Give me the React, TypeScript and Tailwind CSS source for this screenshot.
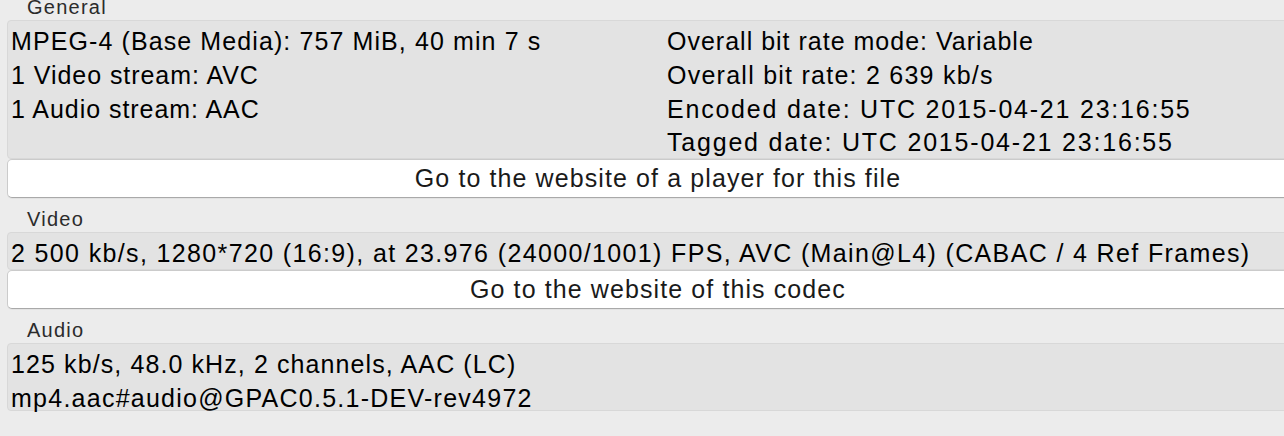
import React from 'react';

type Line = { text: string; track: string };

type Section = {
  title: string;
  height: string;
  left: Line[];
  right?: Line[];
  button?: string;
};

const sections: Section[] = [
  {
    title: 'General',
    height: 'h-[139px]',
    left: [
      { text: 'MPEG-4 (Base Media): 757 MiB, 40 min 7 s', track: 'tracking-[1.1px]' },
      { text: '1 Video stream: AVC', track: 'tracking-[0.95px]' },
      { text: '1 Audio stream: AAC', track: 'tracking-[0.95px]' },
    ],
    right: [
      { text: 'Overall bit rate mode: Variable', track: 'tracking-[1px]' },
      { text: 'Overall bit rate: 2 639 kb/s', track: 'tracking-[1.25px]' },
      { text: 'Encoded date: UTC 2015-04-21 23:16:55', track: 'tracking-[1.78px]' },
      { text: 'Tagged date: UTC 2015-04-21 23:16:55', track: 'tracking-[1.8px]' },
    ],
    button: 'Go to the website of a player for this file',
  },
  {
    title: 'Video',
    height: 'h-[38px]',
    left: [
      {
        text: '2 500 kb/s, 1280*720 (16:9), at 23.976 (24000/1001) FPS, AVC (Main@L4) (CABAC / 4 Ref Frames)',
        track: 'tracking-[1.36px]',
      },
    ],
    button: 'Go to the website of this codec',
  },
  {
    title: 'Audio',
    height: 'h-[68px]',
    left: [
      { text: '125 kb/s, 48.0 kHz, 2 channels, AAC (LC)', track: 'tracking-[1.1px]' },
      { text: 'mp4.aac#audio@GPAC0.5.1-DEV-rev4972', track: 'tracking-[1.25px]' },
    ],
  },
];

function SectionLabel({ title, first }: { title: string; first: boolean }) {
  return (
    <div
      className={`flex items-end pb-[1px] pl-[20px] text-[20px] leading-[24px] tracking-[1.25px] text-[#2b2b2b] ${
        first ? 'h-[20px]' : 'h-[34px]'
      }`}
    >
      {title}
    </div>
  );
}

function Lines({ lines }: { lines: Line[] }) {
  return (
    <>
      {lines.map((l) => (
        <div key={l.text} className={l.track}>
          {l.text}
        </div>
      ))}
    </>
  );
}

export default function App() {
  return (
    <div className="h-[436px] w-[1284px] overflow-hidden bg-[#ececec] font-['Liberation_Sans',Arial,sans-serif] text-black">
      <div className="ml-[7px] w-[1302px]">
        {sections.map((s, i) => (
          <div key={s.title}>
            <SectionLabel title={s.title} first={i === 0} />
            <div
              className={`${s.height} flex rounded-[4px] border border-[#d8d8d8] bg-[#e3e3e3] pl-[3px] pt-[4px] text-[25px] leading-[33.8px] whitespace-nowrap`}
            >
              <div className="w-[656px] shrink-0">
                <Lines lines={s.left} />
              </div>
              {s.right && (
                <div>
                  <Lines lines={s.right} />
                </div>
              )}
            </div>
            {s.button && (
              <button className="block h-[39px] w-full rounded-[5px] border border-[#cbcbcb] border-b-[#a9a9a9] bg-white text-center text-[25px] leading-[37px] tracking-[1.1px] text-[#1a1a1a] shadow-[0_1px_0_rgba(0,0,0,0.04)]">
                {s.button}
              </button>
            )}
          </div>
        ))}
      </div>
    </div>
  );
}
